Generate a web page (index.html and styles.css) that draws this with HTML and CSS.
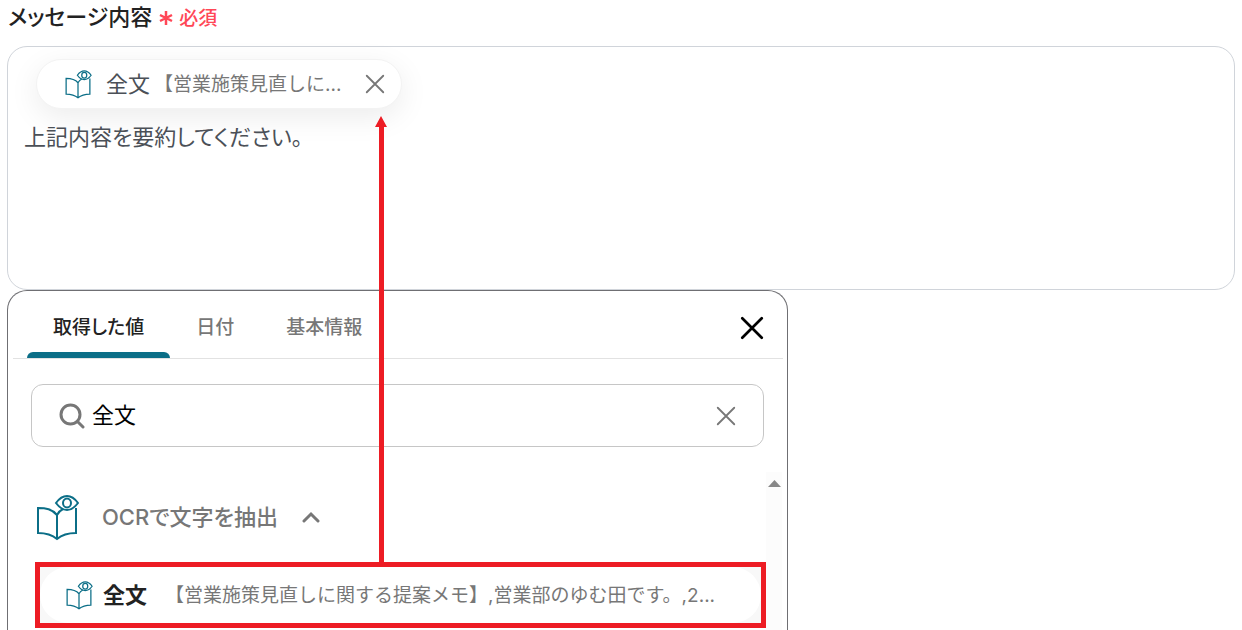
FILE: index.html
```html
<!DOCTYPE html>
<html lang="ja">
<head>
<meta charset="utf-8">
<title>メッセージ内容</title>
<link rel="stylesheet" href="styles.css">
</head>
<body>
<svg class="defs" aria-hidden="true">
  <symbol id="book" viewBox="0 0 44 48">
    <path d="M22 22C17 16 11 15 3 15V40Q15 40 22 46Q29 40 41 40V15M22 22V46M22 22Q24 18 28 16"/>
    <path d="M21 10Q26 3 32 3Q38 3 43 10Q38 17 32 17Q26 17 21 10Z"/>
    <ellipse cx="32" cy="10" rx="4" ry="4.5"/>
  </symbol>
  <symbol id="cross" viewBox="0 0 24 24"><path d="M3 3L21 21M21 3L3 21"/></symbol>
</svg>
<main class="page">
  <h1 class="heading">メッセージ内容
    <span class="required"><svg class="asterisk" viewBox="0 0 14 14" aria-hidden="true"><path d="M7 0V14M1 4L13 10M13 4L1 10"/></svg>必須</span>
  </h1>
  <section class="editor" aria-label="メッセージ内容">
    <div class="chip">
      <svg class="icon book-small" aria-hidden="true"><use href="#book"/></svg>
      <span class="chip-name">全文</span>
      <span class="chip-value">【営業施策見直しに...</span>
      <button class="icon-button" type="button" aria-label="削除"><svg class="icon cross"><use href="#cross"/></svg></button>
    </div>
    <p class="message">上記内容を要約してください。</p>
  </section>
  <section class="panel">
    <header class="panel-head">
      <div class="tabs" role="tablist">
        <button class="tab tab-active" type="button" role="tab" aria-selected="true">取得した値</button>
        <button class="tab" type="button" role="tab" aria-selected="false">日付</button>
        <button class="tab" type="button" role="tab" aria-selected="false">基本情報</button>
      </div>
      <button class="icon-button panel-close" type="button" aria-label="閉じる"><svg class="icon cross cross-large"><use href="#cross"/></svg></button>
    </header>
    <div class="search">
      <svg class="magnifier" viewBox="0 0 26 26" aria-hidden="true"><circle cx="11.500" cy="11.500" r="9.500"/><path d="M18.500 18.500L24 24"/></svg>
      <input class="search-input" type="text" value="全文" aria-label="検索">
      <button class="icon-button" type="button" aria-label="クリア"><svg class="icon cross"><use href="#cross"/></svg></button>
    </div>
    <div class="results">
      <div class="list">
        <button class="group" type="button" aria-expanded="true">
          <svg class="icon book-large" aria-hidden="true"><use href="#book"/></svg>
          <span class="group-name">OCRで文字を抽出</span>
          <svg class="chevron" viewBox="0 0 18 12" aria-hidden="true"><path d="M2 10L9 3L16 10"/></svg>
        </button>
        <div class="highlight">
          <button class="item" type="button">
            <svg class="icon book-small" aria-hidden="true"><use href="#book"/></svg>
            <span class="item-name">全文</span>
            <span class="item-value">【営業施策見直しに関する提案メモ】,営業部のゆむ田です。,2...</span>
          </button>
        </div>
      </div>
      <div class="scrollbar" aria-hidden="true"><svg class="scroll-up" viewBox="0 0 13 7"><path d="M0 7L6.500 0L13 7Z"/></svg></div>
    </div>
  </section>
  <svg class="arrow" viewBox="0 0 12 447" aria-hidden="true"><path d="M6 0L12 11H9V447H4V11H0Z"/></svg>
</main>
</body>
</html>
```
FILE: styles.css
```css
* { box-sizing: border-box; }
body {
  margin: 0;
  background: #fff;
  color: #222;
  font-family: Inter, "Noto Sans CJK JP", sans-serif;
}
button, input { font: inherit; color: inherit; border: 0; background: none; padding: 0; margin: 0; }
.defs { position: absolute; width: 0; height: 0; }
.page {
  display: flex;
  flex-direction: column;
  position: relative;
  height: 100vh;
  padding: 0 7px;
  overflow: hidden;
}
.heading {
  display: flex;
  align-items: center;
  gap: 7px;
  flex: none;
  height: 46px;
  margin: 0;
  padding: 0 0 16px 1px;
  font-size: 22px;
  font-weight: 500;
  font-feature-settings: "palt";
}
.required { display: flex; align-items: center; gap: 6px; padding-top: 2px; color: #ff4757; font-size: 19px; }
.asterisk { width: 14px; height: 14px; margin-top: 4px; fill: none; stroke: currentColor; stroke-width: 2.5; }
.editor {
  flex: none;
  height: 244px;
  padding: 12px 16px 0;
  border: 1px solid #d0d4da;
  border-radius: 20px;
  color: #4b5057;
}
.chip {
  display: flex;
  align-items: center;
  width: 366px;
  height: 50px;
  margin-left: 12px;
  padding: 0 14px 0 27px;
  border: 1px solid #f3f3f3;
  border-radius: 25px;
  background: #fff;
  box-shadow: 0 8px 30px rgba(0, 0, 0, .08);
}
.icon { fill: none; stroke: currentColor; flex: none; }
.book-small { width: 28px; height: 30px; color: #0b6e87; stroke-width: 2; }
.book-large { width: 44px; height: 48px; color: #0b6e87; stroke-width: 2; }
.chip-name, .chip-value, .item-name, .item-value, .group-name { padding-bottom: 4px; white-space: nowrap; }
.chip-name { margin: 0 4px 0 14px; font-size: 22px; }
.chip-value, .item-value { color: #777; font-size: 19px; }
.chip-value { flex: 1; }
.icon-button { display: flex; align-items: center; justify-content: center; width: 24px; height: 24px; flex: none; cursor: pointer; }
.cross { width: 22px; height: 22px; color: #777; stroke-width: 2; stroke-linecap: round; }
.cross-large { width: 26px; height: 26px; color: #000; stroke-width: 2.5; }
.message { margin: 12px 0 0; font-size: 22px; line-height: 32px; font-feature-settings: "palt"; }
.panel {
  flex: 1;
  min-height: 0;
  width: 63.6%;
  border: 1px solid #6f6f73;
  border-bottom: 0;
  border-radius: 20px 20px 0 0;
  overflow: hidden;
}
.panel-head {
  display: flex;
  align-items: center;
  justify-content: space-between;
  height: 68px;
  margin: 0 4px 0 5px;
  padding: 0 17px 0 14px;
  border-bottom: 1px solid #e2e2e2;
}
.tabs { display: flex; height: 100%; }
.tab {
  position: relative;
  padding: 2px 26px 0;
  color: #777;
  font-size: 19px;
  font-weight: 500;
  font-feature-settings: "palt";
}
.tab-active { color: #222; }
.tab-active::after {
  content: "";
  position: absolute;
  left: 0;
  right: 0;
  bottom: 0;
  height: 6px;
  border-radius: 6px 6px 0 0;
  background: #0b6e87;
}
.panel-close { width: 28px; height: 28px; margin-top: 7px; }
.search {
  display: flex;
  align-items: center;
  gap: 7px;
  height: 63px;
  margin: 25px 23px 0;
  padding: 0 25px 0 27px;
  border: 1px solid #c6c6c6;
  border-radius: 12px;
}
.magnifier { width: 26px; height: 26px; flex: none; fill: none; stroke: #777; stroke-width: 3; stroke-linecap: round; }
.search-input { flex: 1; min-width: 0; padding-bottom: 5px; color: #000; font-size: 22px; outline: 0; }
.results { display: flex; margin: 25px 5px 0 27px; }
.list { flex: 1; min-width: 0; }
.group { display: flex; align-items: center; height: 90px; color: #777; font-size: 22px; font-weight: 500; font-feature-settings: "palt"; }
.group-name { margin: 0 24px 0 23px; }
.chevron { width: 18px; height: 12px; fill: none; stroke: #777; stroke-width: 3; stroke-linecap: round; }
.highlight { border: 5px solid #ed1c24; background: #f8f8f8; }
.item {
  display: flex;
  align-items: center;
  width: 100%;
  height: 56px;
  padding: 0 25px;
  border-radius: 28px;
  background: #fff;
}
.item-name { margin: 0 18px 0 10px; color: #222; font-size: 22px; font-weight: 700; }
.scrollbar { display: flex; justify-content: center; width: 16px; height: 158px; padding-top: 8px; background: #fcfcfc; }
.scroll-up { width: 13px; height: 7px; fill: #888; }
.arrow { position: absolute; left: 375px; top: 116px; width: 12px; height: 447px; fill: #ed1c24; }
```
